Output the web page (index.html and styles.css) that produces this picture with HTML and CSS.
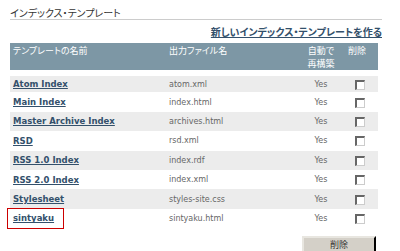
FILE: index.html
```html
<!DOCTYPE html>
<html>
<head>
    <meta charset="utf-8">
    <title>インデックス・テンプレート</title>
    <link rel="stylesheet" href="styles.css">
</head>
<body>

<div class="panel">
    <h2 class="panel-title">インデックス・テンプレート</h2>

    <div class="panel-actions">
        <a href="#">新しいインデックス・テンプレートを作る</a>
    </div>

    <table class="templates">
        <thead>
            <tr>
                <th class="col-name">テンプレートの名前</th>
                <th class="col-file">出力ファイル名</th>
                <th class="col-auto">自動で<br>再構築</th>
                <th class="col-del">削除</th>
            </tr>
        </thead>
        <tbody>
            <tr>
                <td class="col-name"><a href="#">Atom Index</a></td>
                <td class="col-file">atom.xml</td>
                <td class="col-auto">Yes</td>
                <td class="col-del"><input type="checkbox"></td>
            </tr>
            <tr>
                <td class="col-name"><a href="#">Main Index</a></td>
                <td class="col-file">index.html</td>
                <td class="col-auto">Yes</td>
                <td class="col-del"><input type="checkbox"></td>
            </tr>
            <tr>
                <td class="col-name"><a href="#">Master Archive Index</a></td>
                <td class="col-file">archives.html</td>
                <td class="col-auto">Yes</td>
                <td class="col-del"><input type="checkbox"></td>
            </tr>
            <tr>
                <td class="col-name"><a href="#">RSD</a></td>
                <td class="col-file">rsd.xml</td>
                <td class="col-auto">Yes</td>
                <td class="col-del"><input type="checkbox"></td>
            </tr>
            <tr>
                <td class="col-name"><a href="#">RSS 1.0 Index</a></td>
                <td class="col-file">index.rdf</td>
                <td class="col-auto">Yes</td>
                <td class="col-del"><input type="checkbox"></td>
            </tr>
            <tr>
                <td class="col-name"><a href="#">RSS 2.0 Index</a></td>
                <td class="col-file">index.xml</td>
                <td class="col-auto">Yes</td>
                <td class="col-del"><input type="checkbox"></td>
            </tr>
            <tr>
                <td class="col-name"><a href="#">Stylesheet</a></td>
                <td class="col-file">styles-site.css</td>
                <td class="col-auto">Yes</td>
                <td class="col-del"><input type="checkbox"></td>
            </tr>
            <tr>
                <td class="col-name"><span class="marked"><a href="#">sintyaku</a></span></td>
                <td class="col-file">sintyaku.html</td>
                <td class="col-auto">Yes</td>
                <td class="col-del"><input type="checkbox"></td>
            </tr>
        </tbody>
    </table>

    <div class="panel-footer">
        <button type="button">削除</button>
    </div>
</div>

</body>
</html>
```

FILE: styles.css
```css
body {
    margin: 0;
    background-color: white;
    color: #333;
    font-family: "DejaVu Sans", "Noto Sans CJK JP", sans-serif;
}

.panel {
    padding: 7px 18px 0 10px;
}

.panel-title {
    margin: 0;
    font-family: "Noto Sans CJK JP", sans-serif;
    font-feature-settings: "palt";
    font-size: 10px;
    font-weight: normal;
    line-height: 12px;
    color: #333;
    border-bottom: 1px solid #ccc;
}

.panel-actions {
    margin-top: 5px;
    text-align: right;
    line-height: 12px;
}

.panel-actions a {
    font-family: "Noto Sans CJK JP", sans-serif;
    font-feature-settings: "palt";
    font-size: 10px;
    font-weight: bold;
    color: #33506b;
}

.templates {
    width: 368px;
    margin-top: 5px;
    border-collapse: collapse;
    font-size: 8px;
    color: #666;
}

.templates th {
    background-color: #7d97a5;
    border-bottom: 6px solid white;
    color: white;
    font-family: "Noto Sans CJK JP", sans-serif;
    font-feature-settings: "palt";
    font-size: 9px;
    font-weight: normal;
    line-height: 13px;
    text-align: left;
    vertical-align: top;
    padding: 1px 3px 0;
}

.templates td {
    height: 19.4px;
    padding: 0 3px;
    box-sizing: border-box;
    white-space: nowrap;
}

.templates tbody tr:nth-child(odd) td {
    background-color: #ececec;
}

.templates td a {
    font-size: 8.5px;
    font-weight: bold;
    color: #33506b;
}

.col-name {
    width: 150px;
}

.col-file {
    width: 128px;
}

.templates .col-auto {
    width: 36px;
    text-align: center;
}

.templates .col-del {
    padding-left: 6px;
}

.templates td.col-del {
    padding-left: 13px;
}

.templates input[type="checkbox"] {
    -webkit-appearance: none;
    appearance: none;
    display: block;
    width: 10px;
    height: 10px;
    margin: 1px 0 0;
    box-sizing: border-box;
    background-color: white;
    border-top: 2px solid #666;
    border-left: 2px solid #666;
    border-right: 1px solid #ccc;
    border-bottom: 1px solid #ccc;
}

.marked {
    position: relative;
}

.marked::after {
    content: "";
    position: absolute;
    left: -6px;
    right: -10px;
    top: -6px;
    bottom: -6px;
    border: 1px solid #c00;
}

.panel-footer {
    margin-top: 8px;
    width: 366px;
    text-align: right;
}

.panel-footer button {
    display: inline-block;
    width: 74px;
    height: 18px;
    padding: 0 0 2px;
    background-color: #d4d0c8;
    border: 2px outset #e8e6e0;
    border-right-color: #333;
    border-bottom-color: #333;
    color: #333;
    font-family: "Noto Sans CJK JP", sans-serif;
    font-size: 9px;
    line-height: 11px;
    vertical-align: top;
}
```
